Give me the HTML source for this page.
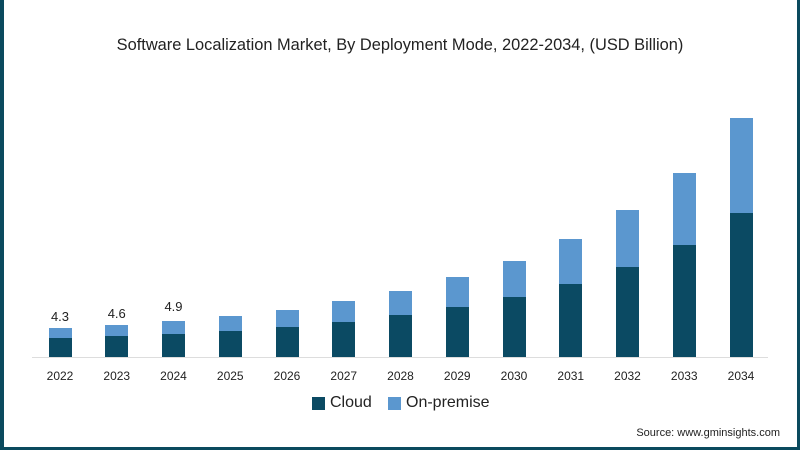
<!DOCTYPE html>
<html><head><meta charset="utf-8"><style>
body{margin:0;width:800px;height:450px;overflow:hidden;background:#0b4a5e;font-family:"Liberation Sans",sans-serif}
#f{position:absolute;left:4px;top:0;width:793px;height:447px;background:#fff}
.t{position:absolute;left:0;width:800px;top:36px;text-align:center;font-size:16.4px;color:#222}
.b{position:absolute;width:23px}
.l{position:absolute;font-size:12px;color:#222;width:50px;text-align:center}
</style></head><body>
<div id="f"></div>
<div class="t">Software Localization Market, By Deployment Mode, 2022-2034, (USD Billion)</div>
<div style="position:absolute;left:32px;top:357px;width:736px;height:1px;background:#ddd"></div>
<div id="c"></div>
<div style="position:absolute;left:312px;top:397px;width:13px;height:13px;background:#0b4a63"></div>
<div style="position:absolute;left:330px;top:394px;font-size:16px;color:#222">Cloud</div>
<div style="position:absolute;left:388px;top:397px;width:13px;height:13px;background:#5b97cf"></div>
<div style="position:absolute;left:406px;top:394px;font-size:16px;color:#222">On-premise</div>
<div style="position:absolute;right:20px;top:427px;font-size:11px;color:#222">Source: www.gminsights.com</div>
<script>
var d=[[328,338],[325,336],[321,334],[316,331],[310,327],[301,322],[291,315],[277,307],[261,297],[239,284],[210,267],[173,245],[118,213]];
var h='';
d.forEach(function(v,i){var cx=60+i*56.75,x=cx-11.5;
h+='<div class="b" style="left:'+x+'px;top:'+v[0]+'px;height:'+(v[1]-v[0])+'px;background:#5b97cf"></div>';
h+='<div class="b" style="left:'+x+'px;top:'+v[1]+'px;height:'+(357-v[1])+'px;background:#0b4a63"></div>';
h+='<div class="l" style="left:'+(cx-25)+'px;top:369px">'+(2022+i)+'</div>';});
[['4.3',309],['4.6',306],['4.9',299]].forEach(function(v,i){h+='<div class="l" style="font-size:13px;left:'+(60+i*56.75-25)+'px;top:'+v[1]+'px">'+v[0]+'</div>';});
document.getElementById('c').innerHTML=h;
</script>
</body></html>
